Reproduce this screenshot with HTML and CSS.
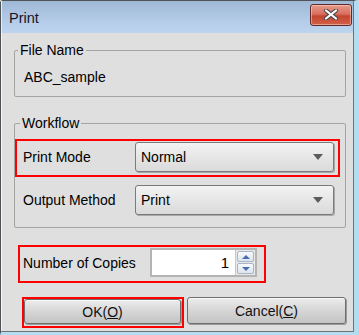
FILE: index.html
```html
<!DOCTYPE html>
<html lang="en">
<head>
    <meta charset="UTF-8">
    <meta name="viewport" content="width=device-width, initial-scale=1.0">
    <title>Print</title>
    <link rel="stylesheet" href="styles.css">
</head>
<body>
    <div class="window">
        <div class="frame">
            <div class="titlebar">
                <span class="title">Print</span>
                <div class="close-btn">
                    <svg width="16" height="11" viewBox="0 0 16 11">
                        <path d="M3 1.5 L13 9.5 M13 1.5 L3 9.5" stroke="#4a4a4a" stroke-width="4.2" stroke-linecap="round"/>
                        <path d="M3 1.5 L13 9.5 M13 1.5 L3 9.5" stroke="#ffffff" stroke-width="2.2" stroke-linecap="round"/>
                    </svg>
                </div>
            </div>
            <div class="client">
                <fieldset class="group group-file">
                    <legend>File Name</legend>
                    <div class="file-name">ABC_sample</div>
                </fieldset>

                <fieldset class="group group-workflow">
                    <legend>Workflow</legend>
                    <div class="field-row highlight">
                        <span class="label">Print Mode</span>
                        <div class="combo"><span>Normal</span><span class="arrow"></span></div>
                    </div>
                    <div class="field-row">
                        <span class="label">Output Method</span>
                        <div class="combo"><span>Print</span><span class="arrow"></span></div>
                    </div>
                </fieldset>

                <div class="copies-row highlight">
                    <span class="copies-label">Number of Copies</span>
                    <div class="spin-box">
                        <span class="spin-value">1</span>
                        <div class="spin-buttons">
                            <div class="spin spin-up"></div>
                            <div class="spin spin-down"></div>
                        </div>
                    </div>
                </div>

                <div class="button-row">
                    <div class="ok-wrap highlight">
                        <button type="button" class="btn btn-ok">OK(<u>O</u>)</button>
                    </div>
                    <button type="button" class="btn btn-cancel">Cancel(<u>C</u>)</button>
                </div>
            </div>
        </div>
    </div>
</body>
</html>
```

FILE: styles.css
```css
body {
    margin: 0;
    padding: 0;
    background-color: #ffffff;
    font-family: 'Liberation Sans', Arial, sans-serif;
    font-size: 14px;
    color: #000;
}

.window {
    width: 359px;
    height: 335px;
    box-sizing: border-box;
    border-top: 1px solid #4f5358;
    border-left: 1px solid #4f5358;
    border-right: 5px solid #b2dcf0;
    border-bottom: 3px solid #b2dcf0;
    border-top-left-radius: 3px;
}

.frame {
    height: 100%;
    box-sizing: border-box;
    border-right: 1px solid #6f7378;
    border-bottom: 1px solid #6f7378;
    background-color: #dfdfdf;
    box-shadow: inset 1px 0 0 #f4f4f4;
    display: flex;
    flex-direction: column;
}

.titlebar {
    height: 32px;
    flex-shrink: 0;
    display: flex;
    align-items: center;
    justify-content: space-between;
    padding: 0 1px 0 8px;
    background: linear-gradient(to bottom, #9fb8d6, #b6cee9 70%, #bcd4ee);
    box-shadow: inset 1px 0 0 #e4eef8;
}

.title {
    font-size: 14.5px;
    color: #141428;
    padding-top: 1px;
}

.close-btn {
    width: 40px;
    height: 20px;
    margin-top: -5px;
    border: 1px solid #5e2a2a;
    border-radius: 3px;
    background: linear-gradient(to bottom, #e69a8c 0%, #d9705e 45%, #c4452f 55%, #d4604a 100%);
    box-shadow: inset 0 0 0 1px rgba(255, 220, 210, 0.5);
    display: flex;
    align-items: center;
    justify-content: center;
}

.client {
    flex: 1;
    padding: 10px 7px 0 13px;
}

.group {
    margin: 0;
    border: 1px solid #a4a4a4;
    border-radius: 2px;
    min-width: 0;
}

.group legend {
    line-height: 14px;
    padding: 0 2px;
    color: #000;
}

.group-file {
    padding: 12px 9px 11px 9px;
}

.group-file legend {
    margin-left: -6px;
}

.file-name {
    line-height: 16px;
}

.group-workflow {
    margin-top: 19px;
    padding: 9px 5px 7px 0;
}

.group-workflow legend {
    margin-left: 5px;
}

.field-row {
    display: flex;
    align-items: center;
    border: 2px solid transparent;
    padding: 1px 3px 3px 6px;
}

.field-row + .field-row {
    margin-top: 5px;
}

.highlight {
    border: 2px solid #ff0000;
}

.label {
    width: 112px;
    flex-shrink: 0;
}

.combo {
    width: 199px;
    height: 30px;
    box-sizing: border-box;
    border: 1px solid #7a7a7a;
    border-radius: 3px;
    background: linear-gradient(to bottom, #f3f3f3, #e6e6e6 50%, #dadada);
    box-shadow: 1px 1px 0 #a8a8a8;
    display: flex;
    align-items: center;
    justify-content: space-between;
    padding: 0 10px 0 5px;
}

.arrow {
    width: 0;
    height: 0;
    border-left: 5px solid transparent;
    border-right: 5px solid transparent;
    border-top: 6px solid #5c5c5c;
}

.copies-row {
    display: flex;
    align-items: center;
    width: 248px;
    box-sizing: border-box;
    margin: 17px 0 0 4px;
    padding: 1px 7px 4px 3px;
}

.copies-label {
    width: 127px;
    flex-shrink: 0;
}

.spin-box {
    width: 107px;
    height: 29px;
    box-sizing: border-box;
    border: 2px solid #b4b4b4;
    background-color: #ffffff;
    display: flex;
    align-items: center;
    justify-content: flex-end;
}

.spin-value {
    font-size: 15px;
    padding-right: 6px;
}

.spin-buttons {
    width: 20px;
    height: 100%;
    background-color: #e8e8e8;
    border-left: 1px solid #c8c8c8;
    display: flex;
    flex-direction: column;
    justify-content: center;
    gap: 1px;
    padding: 1px;
    box-sizing: border-box;
}

.spin {
    flex: 1;
    border: 1px solid #a9b4c6;
    border-radius: 2px;
    background: linear-gradient(to bottom, #f7f9fc, #dde4ee);
    display: flex;
    align-items: center;
    justify-content: center;
}

.spin::after {
    content: "";
    width: 0;
    height: 0;
    border-left: 4px solid transparent;
    border-right: 4px solid transparent;
}

.spin-up::after {
    border-bottom: 4px solid #4a6cb0;
}

.spin-down::after {
    border-top: 4px solid #4a6cb0;
}

.button-row {
    display: flex;
    align-items: flex-start;
    margin: 14px 0 0 8px;
}

.ok-wrap {
    width: 162px;
    box-sizing: border-box;
    padding: 0 1px 2px 0;
}

.btn {
    font-family: inherit;
    font-size: 14px;
    color: #111;
    border: 1px solid #6e6e6e;
    border-radius: 3px;
    background: linear-gradient(to bottom, #ececec, #d6d6d6 50%, #c4c4c4);
    box-shadow: inset 0 1px 0 #f8f8f8, 1px 1px 0 #9a9a9a;
    padding: 0;
    cursor: pointer;
}

.btn-ok {
    width: 157px;
    height: 25px;
    display: block;
}

.btn-cancel {
    width: 160px;
    height: 27px;
    margin-left: 3px;
}
```
